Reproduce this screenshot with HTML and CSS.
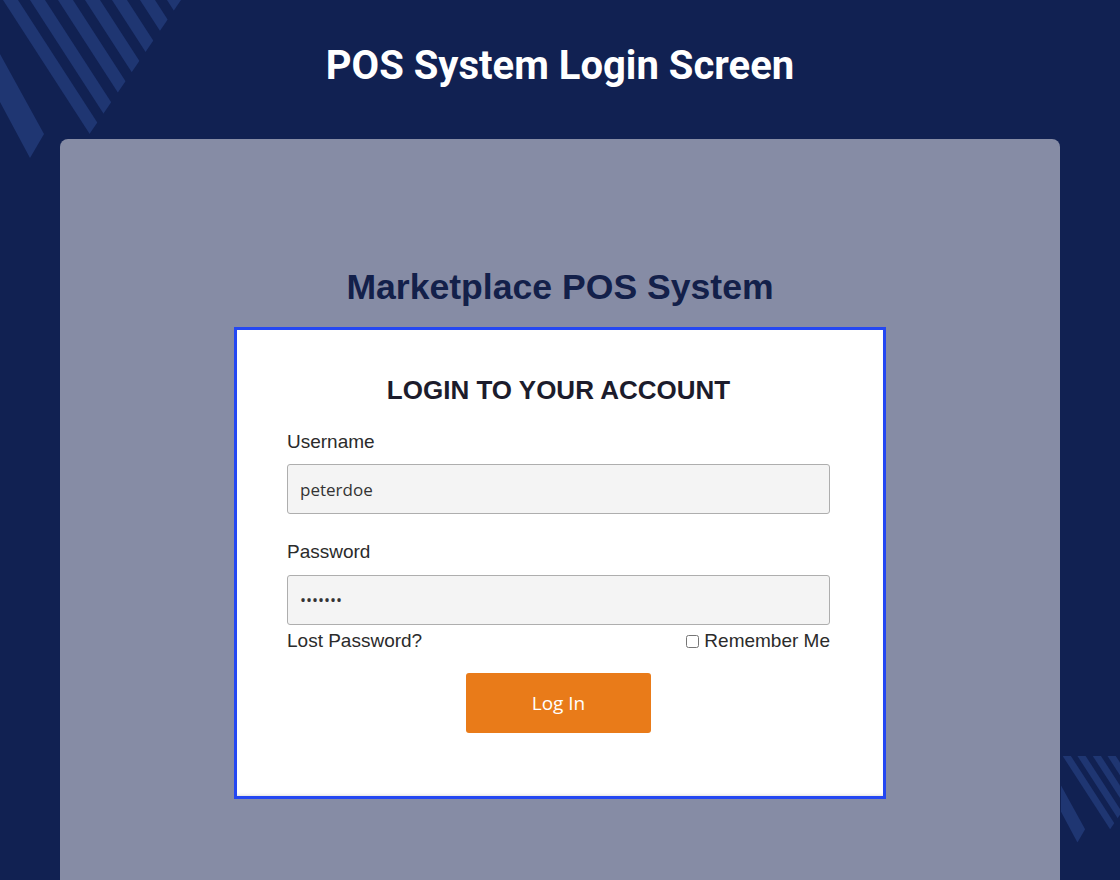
FILE: index.html
```html
<!DOCTYPE html>
<html lang="en">
<head>
    <meta charset="UTF-8">
    <meta name="viewport" content="width=device-width, initial-scale=1.0">
    <title>POS System Login Screen</title>
    <link rel="stylesheet" href="styles.css">
</head>
<body>
    <svg class="stripes stripes-top" viewBox="0 0 190 170" aria-hidden="true">
        <defs>
            <clipPath id="cutTop">
                <polygon points="0,0 181,0 0,265"></polygon>
            </clipPath>
        </defs>
        <g clip-path="url(#cutTop)" fill="#1f3672">
            <polygon points="3,0 18,0 128,170 113,170"></polygon>
            <polygon points="30,0 45,0 155,170 140,170"></polygon>
            <polygon points="58,0 73,0 183,170 168,170"></polygon>
            <polygon points="85,0 100,0 210,170 195,170"></polygon>
            <polygon points="112,0 127,0 237,170 222,170"></polygon>
            <polygon points="140,0 155,0 265,170 250,170"></polygon>
            <polygon points="167,0 182,0 292,170 277,170"></polygon>
        </g>
        <polygon fill="#1f3672" points="0,54 44,134 30,158 0,102"></polygon>
    </svg>
    <svg class="stripes stripes-bottom" viewBox="0 0 190 170" aria-hidden="true">
        <defs>
            <clipPath id="cutBottom">
                <polygon points="0,0 181,0 0,265"></polygon>
            </clipPath>
        </defs>
        <g clip-path="url(#cutBottom)" fill="#1f3672">
            <polygon points="3,0 18,0 128,170 113,170"></polygon>
            <polygon points="30,0 45,0 155,170 140,170"></polygon>
            <polygon points="58,0 73,0 183,170 168,170"></polygon>
            <polygon points="85,0 100,0 210,170 195,170"></polygon>
            <polygon points="112,0 127,0 237,170 222,170"></polygon>
            <polygon points="140,0 155,0 265,170 250,170"></polygon>
            <polygon points="167,0 182,0 292,170 277,170"></polygon>
        </g>
        <polygon fill="#1f3672" points="0,54 44,134 30,158 0,102"></polygon>
    </svg>

    <h1 class="page-title">POS System Login Screen</h1>

    <div class="card">
        <h2 class="brand">Marketplace POS System</h2>

        <div class="login-box">
            <h3 class="login-title">LOGIN TO YOUR ACCOUNT</h3>
            <form class="login-form">
                <label for="username">Username</label>
                <input type="text" id="username" name="username" value="peterdoe">

                <label for="password" class="second">Password</label>
                <input type="password" id="password" name="password" value="1234567">

                <div class="form-row">
                    <a href="#" class="lost">Lost Password?</a>
                    <label class="remember"><input type="checkbox" name="remember"> Remember Me</label>
                </div>

                <button type="button">Log In</button>
            </form>
        </div>
    </div>
</body>
</html>
```

FILE: styles.css
```css
body { margin: 0; height: 880px; overflow: hidden; background-color: #112152; font-family: "Liberation Sans", Arial, sans-serif; position: relative; }
.stripes { position: absolute; z-index: 0; }
.stripes-top { left: 0; top: 0; width: 190px; height: 170px; }
.stripes-bottom { left: 1061px; top: 756px; width: 104px; height: 93px; }
.page-title { position: relative; z-index: 1; margin: 0; padding-top: 42px; font-family: Roboto, "Liberation Sans", sans-serif; font-size: 40px; line-height: 47px; font-weight: 700; color: #fff; text-align: center; }
.card { position: relative; z-index: 1; margin: 50px 60px 0; height: 800px; padding-top: 128px; box-sizing: border-box; background-color: #868ca5; border-radius: 8px 8px 0 0; }
.brand { margin: 0 0 20px; font-size: 35.6px; line-height: 40px; font-weight: 700; color: #13204a; text-align: center; }
.login-box { width: 652px; margin: 0 auto; padding: 45px 53px 63px 50px; box-sizing: border-box; border: 3px solid #2447f2; background: #fff; box-shadow: inset 0 -3px 3px -2px rgba(0, 0, 0, 0.12); }
.login-title { margin: 0 0 26px; font-size: 26px; line-height: 30px; font-weight: 700; color: #1c1c2c; text-align: center; }
.login-form label { display: block; font-size: 19px; line-height: 22px; color: #2b2b2b; }
.login-form label.second { margin-top: 27px; }
.login-form input[type="text"], .login-form input[type="password"] { display: block; width: 100%; height: 50px; margin-top: 11px; padding: 0 12px; box-sizing: border-box; border: 1px solid #aeaeae; border-radius: 3px; background: #f4f4f4; font-family: "Open Sans", sans-serif; font-size: 17px; color: #333; }
.login-form input[type="password"] { margin-top: 12px; font-size: 16px; }
.form-row { display: flex; justify-content: space-between; align-items: center; margin-top: 5px; font-size: 19px; line-height: 22px; }
.lost { color: #2b2b2b; text-decoration: none; }
.login-form .remember { display: flex; align-items: center; }
.remember input { margin: 0 5px 0 0; width: 13px; height: 13px; }
button { display: block; width: 185px; height: 60px; margin: 21px auto 0; border: none; border-radius: 3px; background-color: #e97b19; color: #fff; font-family: "Open Sans", sans-serif; font-size: 19px; cursor: pointer; }
```
